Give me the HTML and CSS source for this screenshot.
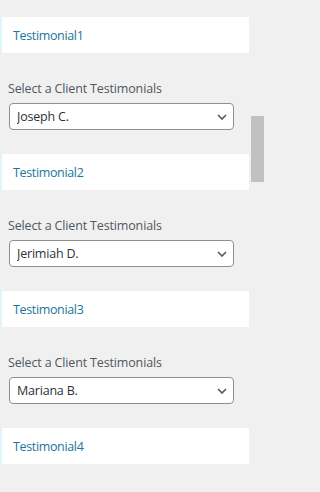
FILE: index.html
```html
<!DOCTYPE html>
<html lang="en">
<head>
<meta charset="utf-8">
<title>Testimonials</title>
<link rel="stylesheet" href="styles.css">
</head>
<body>
<div class="panel">
  <section class="block">
    <h3 class="block-title">Testimonial1</h3>
    <label class="field-label">Select a Client Testimonials</label>
    <div class="select-wrap">
      <select class="select"><option>Joseph C.</option></select>
      <svg class="chev" width="10" height="6" viewBox="0 0 10 6"><path d="M1 1 L5 5 L9 1" fill="none" stroke="#50575e" stroke-width="1.6"/></svg>
    </div>
  </section>
  <section class="block">
    <h3 class="block-title">Testimonial2</h3>
    <label class="field-label">Select a Client Testimonials</label>
    <div class="select-wrap">
      <select class="select"><option>Jerimiah D.</option></select>
      <svg class="chev" width="10" height="6" viewBox="0 0 10 6"><path d="M1 1 L5 5 L9 1" fill="none" stroke="#50575e" stroke-width="1.6"/></svg>
    </div>
  </section>
  <section class="block">
    <h3 class="block-title">Testimonial3</h3>
    <label class="field-label">Select a Client Testimonials</label>
    <div class="select-wrap">
      <select class="select"><option>Mariana B.</option></select>
      <svg class="chev" width="10" height="6" viewBox="0 0 10 6"><path d="M1 1 L5 5 L9 1" fill="none" stroke="#50575e" stroke-width="1.6"/></svg>
    </div>
  </section>
  <section class="block">
    <h3 class="block-title">Testimonial4</h3>
  </section>
</div>
<div class="scroll-thumb"></div>
</body>
</html>
```
FILE: styles.css
```css
html, body {
  margin: 0;
  padding: 0;
  background: #f0f0f1;
  font-family: "Open Sans", "Noto Sans", sans-serif;
  overflow: hidden;
}
.panel {
  width: 249px;
  padding-top: 17px;
}
.block {
  display: flex;
  flex-direction: column;
  padding-bottom: 24px;
}
.block-title {
  margin: 0;
  height: 36px;
  box-sizing: border-box;
  background: #fff;
  border-left: 2px solid #ddf6fb;
  padding-left: 11px;
  display: flex;
  align-items: center;
  font-size: 12.5px;
  font-weight: 400;
  color: #21759b;
  letter-spacing: -0.35px;
}
.field-label {
  margin: 27px 0 5px 8px;
  font-size: 12.5px;
  line-height: 18px;
  color: #50575e;
  letter-spacing: -0.15px;
}
.select-wrap {
  position: relative;
  margin-left: 9px;
  width: 225px;
}
.select {
  appearance: none;
  -webkit-appearance: none;
  display: block;
  width: 100%;
  height: 27px;
  box-sizing: border-box;
  border: 1px solid #8c8f94;
  border-radius: 4px;
  background: #fff;
  padding: 0 24px 0 7px;
  font-family: "Open Sans", "Noto Sans", sans-serif;
  font-size: 12.5px;
  letter-spacing: -0.2px;
  color: #2c3338;
}
.chev {
  position: absolute;
  right: 7px;
  top: 11px;
  pointer-events: none;
}
.scroll-thumb {
  position: absolute;
  left: 251px;
  top: 116px;
  width: 13px;
  height: 66px;
  background: #c1c1c1;
}
```
